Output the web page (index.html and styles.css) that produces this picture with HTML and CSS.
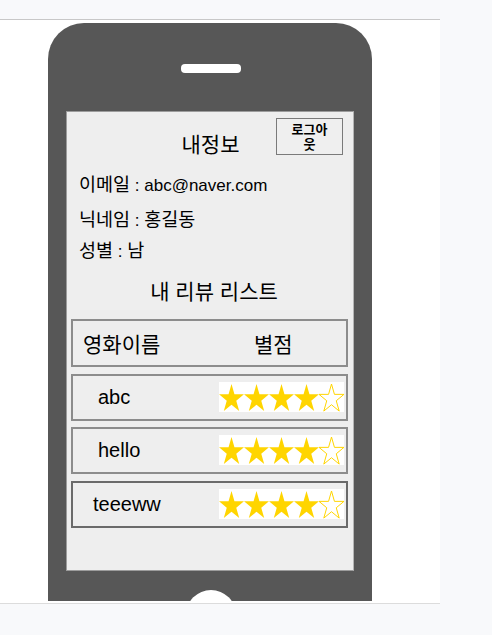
FILE: index.html
```html
<!DOCTYPE html>
<html lang="ko">
<head>
<meta charset="utf-8">
<title>내정보</title>
<link rel="stylesheet" href="styles.css">
</head>
<body>
<svg class="defs" width="0" height="0" aria-hidden="true">
  <defs>
    <polygon id="star" points="12.5,2 15.44,12.37 24.96,12.37 17.26,18.77 20.2,29.1 12.5,22.73 4.8,29.1 7.74,18.77 0.04,12.37 9.56,12.37"/>
  </defs>
</svg>
<div class="frame">
  <div class="phone">
    <div class="speaker"></div>
    <div class="screen">
      <div class="head">
        <h1 class="title">내정보</h1>
        <button class="logout">로그아웃</button>
      </div>
      <p class="info info-email"><span class="ko">이메일</span> : abc@naver.com</p>
      <p class="info info-nick"><span class="ko">닉네임</span> : <span class="ko">홍길동</span></p>
      <p class="info info-gender"><span class="ko">성별</span> : <span class="ko">남</span></p>
      <h2 class="subtitle">내 리뷰 리스트</h2>
      <div class="list-head">
        <span class="col-name">영화이름</span>
        <span class="col-rate">별점</span>
      </div>
      <div class="rows">
        <div class="row row-1">
          <span class="name">abc</span>
          <svg class="stars" width="125" height="30" viewBox="0 0 125 30">
            <use href="#star" class="full"/>
            <use href="#star" class="full" x="25"/>
            <use href="#star" class="full" x="50"/>
            <use href="#star" class="full" x="75"/>
            <use href="#star" class="empty" x="100"/>
          </svg>
        </div>
        <div class="row row-2">
          <span class="name">hello</span>
          <svg class="stars" width="125" height="30" viewBox="0 0 125 30">
            <use href="#star" class="full"/>
            <use href="#star" class="full" x="25"/>
            <use href="#star" class="full" x="50"/>
            <use href="#star" class="full" x="75"/>
            <use href="#star" class="empty" x="100"/>
          </svg>
        </div>
        <div class="row row-3 row-active">
          <span class="name name-wide">teeeww</span>
          <svg class="stars" width="125" height="30" viewBox="0 0 125 30">
            <use href="#star" class="full"/>
            <use href="#star" class="full" x="25"/>
            <use href="#star" class="full" x="50"/>
            <use href="#star" class="full" x="75"/>
            <use href="#star" class="empty" x="100"/>
          </svg>
        </div>
      </div>
    </div>
    <div class="home"></div>
  </div>
</div>
</body>
</html>
```

FILE: styles.css
```css
html, body {
  margin: 0;
  padding: 0;
}
body {
  background: #f8f9fb;
  font-family: "Liberation Sans", "Noto Sans CJK KR", sans-serif;
  color: #000;
  width: 492px;
  height: 635px;
  overflow: hidden;
}
.defs {
  position: absolute;
  width: 0;
  height: 0;
}
.frame {
  margin-top: 19px;
  width: 440px;
  height: 583px;
  background: #fff;
  border-top: 1px solid #c8c8c8;
  border-bottom: 1px solid #dcdcdc;
  overflow: hidden;
}
.phone {
  margin: 3px 0 0 48px;
  width: 324px;
  height: 578px;
  background: #575757;
  border-radius: 36px 36px 0 0;
  padding: 41px 18px 0;
  box-sizing: border-box;
  overflow: hidden;
  display: flex;
  flex-direction: column;
  align-items: center;
}
.speaker {
  width: 60px;
  height: 9px;
  border-radius: 4px;
  background: #fff;
  margin-left: 2px;
  flex-shrink: 0;
}
.screen {
  margin-top: 38px;
  width: 288px;
  height: 460px;
  flex-shrink: 0;
  box-sizing: border-box;
  background: #eeeeee;
  border: 1px solid #9c9c9c;
  border-right-color: #b5b5b5;
  position: relative;
  align-self: flex-start;
}
.head {
  padding-top: 19px;
  text-align: center;
}
.title {
  margin: 0;
  font-size: 21px;
  font-weight: normal;
  line-height: 28px;
  padding-left: 1px;
}
.logout {
  position: absolute;
  top: 6px;
  right: 10px;
  width: 67px;
  height: 37px;
  box-sizing: border-box;
  padding: 0 10px;
  background: #efefef;
  border: 1px solid #7a7a7a;
  font-family: "Liberation Sans", "Noto Sans CJK KR", sans-serif;
  font-weight: bold;
  font-size: 13px;
  line-height: 15px;
  color: #000;
  word-break: break-all;
}
.info {
  margin: 0;
  padding-left: 12px;
  font-size: 17px;
  line-height: 24px;
  height: 24px;
}
.info .ko {
  font-size: 18.5px;
}
.info-email { margin-top: 14px; }
.info-nick { margin-top: 11px; }
.info-gender { margin-top: 7px; }
.subtitle {
  margin: 15px 0 0;
  font-size: 21px;
  font-weight: normal;
  line-height: 28px;
  text-align: center;
  padding-left: 8px;
}
.list-head, .row {
  margin-left: 4px;
  width: 277px;
  box-sizing: border-box;
  border: 2px solid #8c8c8c;
  display: flex;
  align-items: center;
}
.list-head {
  margin-top: 13px;
  height: 48px;
  font-size: 21px;
}
.col-name {
  margin-left: 10px;
  width: 171px;
}
.rows {
  display: flex;
  flex-direction: column;
}
.row {
  height: 47px;
  justify-content: space-between;
  padding-right: 2px;
}
.row-1 { margin-top: 7px; }
.row-2 { margin-top: 6px; }
.row-3 { margin-top: 7px; }
.row-active {
  border-color: #6a6a6a;
}
.name {
  font-size: 20px;
  margin-left: 25px;
}
.name-wide {
  margin-left: 20px;
}
.stars {
  display: block;
  background: #fff;
  margin-top: -2px;
}
.stars .full {
  fill: #ffd500;
}
.stars .empty {
  fill: none;
  stroke: #ffd500;
  stroke-width: 1;
}
.home {
  margin-top: 19px;
  width: 50px;
  height: 50px;
  border-radius: 50%;
  background: #fff;
  flex-shrink: 0;
  margin-left: 2px;
}
```
